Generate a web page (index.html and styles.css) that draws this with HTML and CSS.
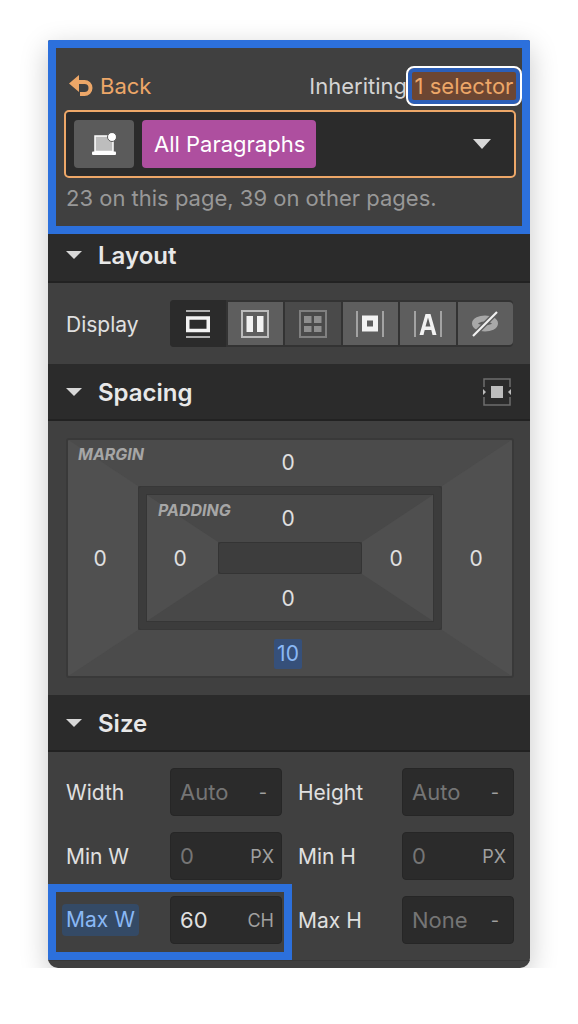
FILE: index.html
```html
<!DOCTYPE html>
<html>
  <head>
    <title>Style panel</title>
    <link rel="stylesheet" href="styles.css">
  </head>
  <body>
    <div class="panel">
      <div class="selector-block">
        <div class="top-row">
          <a class="back">
            <svg width="24" height="22" viewBox="0 0 24 22"><path d="M0 8.500 10 0v5h5.500a8 8 0 0 1 8 8 8 8 0 0 1-8 8H11v-4h4.500a4 4 0 0 0 0-8H10v8z" fill="#eda768"/></svg>
            Back
          </a>
          <div class="inherit">Inheriting<span class="inherit-count">1 selector</span></div>
        </div>
        <div class="selector-box">
          <span class="state-btn">
            <svg width="24" height="22" viewBox="0 0 24 22"><rect x="3" y="3" width="18" height="15.500" fill="#bdbdbd" stroke="#fff" stroke-width="1.500"/><rect x="0" y="18.500" width="24" height="3.500" rx="1" fill="#fff"/><circle cx="20" cy="4" r="4.500" fill="#fff" stroke="#5b5b5b"/></svg>
          </span>
          <span class="tag">All Paragraphs</span>
          <span class="caret caret-big"></span>
        </div>
        <div class="hint">23 on this page, 39 on other pages.</div>
      </div>

      <div class="section-head first"><span class="caret"></span>Layout</div>
      <div class="display-row">
        <span class="label">Display</span>
        <div class="segments">
          <span class="seg active">
            <svg width="24" height="28" viewBox="0 0 24 28"><path d="M0 1h24M0 27h24" stroke="#ddd" stroke-width="1.500"/><rect x="1.750" y="8" width="20.500" height="12.500" fill="none" stroke="#f2f2f2" stroke-width="3.500"/></svg>
          </span>
          <span class="seg">
            <svg width="28" height="28" viewBox="0 0 28 28"><rect x="1" y="1" width="26" height="26" fill="none" stroke="#bbb" stroke-width="2"/><rect x="5.500" y="6" width="6.500" height="16" fill="#f2f2f2"/><rect x="16" y="6" width="6.500" height="16" fill="#f2f2f2"/></svg>
          </span>
          <span class="seg dim">
            <svg width="28" height="28" viewBox="0 0 28 28"><rect x="1" y="1" width="26" height="26" fill="none" stroke="#808080" stroke-width="2"/><path d="M5 6h7.500v7H5zM15 6h7.500v7H15zM5 16h7.500v6H5zM15 16h7.500v6H15z" fill="#8e8e8e"/></svg>
          </span>
          <span class="seg">
            <svg width="28" height="26" viewBox="0 0 28 26"><path d="M1 0v26M27 0v26" stroke="#bbb" stroke-width="1.500"/><rect x="8.500" y="7" width="11" height="11" fill="none" stroke="#f2f2f2" stroke-width="5"/></svg>
          </span>
          <span class="seg">
            <svg width="28" height="26" viewBox="0 0 28 26"><path d="M1 0v26M27 0v26" stroke="#bbb" stroke-width="1.500"/><path d="M5.500 24 11.500 3h5l6 21h-4l-1.200-5h-6.600l-1.200 5zM11.500 15.500h5L14 6.500z" fill="#f2f2f2" fill-rule="evenodd"/></svg>
          </span>
          <span class="seg">
            <svg width="28" height="26" viewBox="0 0 28 26"><ellipse cx="14" cy="12.500" rx="10" ry="5" fill="none" stroke="#a8a8a8" stroke-width="6"/><path d="M2 25 26 1" stroke="#5e5e5e" stroke-width="5"/><path d="M2 25 26 1" stroke="#f2f2f2" stroke-width="2.200"/></svg>
          </span>
        </div>
      </div>

      <div class="section-head">
        <span class="caret"></span>Spacing
        <svg class="head-icon" width="28" height="28" viewBox="0 0 28 28"><path d="M1 9V1h26v8M1 19v8h26v-8" fill="none" stroke="#6e6e6e" stroke-width="1.500"/><rect x="8" y="8" width="12" height="12" fill="#bdbdbd"/><path d="M0 11v6l3-3zM28 11v6l-3-3z" fill="#bdbdbd"/></svg>
      </div>
      <div class="spacing-body">
        <div class="margin-box">
          <div class="padding-frame">
            <div class="padding-box">
              <div class="content-box"></div>
              <span class="box-title">PADDING</span>
              <span class="val val-top">0</span>
              <span class="val val-left">0</span>
              <span class="val val-right">0</span>
              <span class="val val-bottom">0</span>
            </div>
          </div>
          <span class="box-title">MARGIN</span>
          <span class="val val-top">0</span>
          <span class="val val-left">0</span>
          <span class="val val-right">0</span>
          <span class="val val-bottom changed">10</span>
        </div>
      </div>

      <div class="section-head"><span class="caret"></span>Size</div>
      <div class="size-body">
        <span class="label">Width</span>
        <div class="field"><span class="muted">Auto</span><span class="unit dash">-</span></div>
        <span class="label">Height</span>
        <div class="field"><span class="muted">Auto</span><span class="unit dash">-</span></div>
        <span class="label">Min W</span>
        <div class="field"><span class="muted">0</span><span class="unit">PX</span></div>
        <span class="label">Min H</span>
        <div class="field"><span class="muted">0</span><span class="unit">PX</span></div>
        <span class="label"><span class="label-set">Max W</span></span>
        <div class="field"><span>60</span><span class="unit">CH</span></div>
        <span class="label">Max H</span>
        <div class="field"><span class="muted">None</span><span class="unit dash">-</span></div>
        <div class="callout"></div>
      </div>
      <div class="panel-foot"></div>
    </div>
  </body>
</html>
```

FILE: styles.css
```css
* {
  box-sizing: border-box;
}
body {
  margin: 0;
  background: #fff;
  font-family: Inter, "Liberation Sans", sans-serif;
  font-size: 22px;
  color: #e6e6e6;
}
.panel {
  width: 482px;
  margin: 40px 48px 0;
  background: #404040;
  border-radius: 2px 2px 10px 10px;
  box-shadow: 0 8px 28px rgba(0, 0, 0, 0.22);
  overflow: hidden;
}

/* selector block */
.selector-block {
  height: 194px;
  border: 8px solid #2c70dc;
  padding: 18px 8px 0;
}
.top-row {
  display: flex;
  justify-content: space-between;
  align-items: center;
  height: 40px;
}
.back {
  display: flex;
  align-items: center;
  gap: 7px;
  margin-left: 5px;
  color: #eda768;
}
.inherit {
  display: flex;
  align-items: center;
  color: #d4d4d4;
  margin-right: -8px;
}
.inherit-count {
  margin-left: -1px;
  height: 40px;
  line-height: 36px;
  width: 116px;
  text-align: center;
  color: #eda768;
  background: #6c4632;
  border: 2px solid #fff;
  border-radius: 8px;
  box-shadow: inset 0 0 0 4px #2c5fb8;
}
.selector-box {
  display: flex;
  align-items: center;
  gap: 8px;
  height: 68px;
  margin: 4px -2px 0 0;
  padding: 0 8px;
  background: #2b2b2b;
  border: 2px solid #eda768;
  border-radius: 5px;
}
.state-btn {
  display: flex;
  align-items: center;
  justify-content: center;
  width: 60px;
  height: 48px;
  background: #5b5b5b;
  border-radius: 4px;
}
.tag {
  display: flex;
  align-items: center;
  height: 48px;
  padding: 0 11px 0 12px;
  background: #ae4f9f;
  color: #fff;
  border-radius: 4px;
}
.caret {
  display: inline-block;
  width: 0;
  height: 0;
  border-left: 8px solid transparent;
  border-right: 8px solid transparent;
  border-top: 8px solid #d8d8d8;
}
.caret-big {
  margin-left: auto;
  margin-right: 15px;
  border-left-width: 9px;
  border-right-width: 9px;
  border-top-width: 10px;
}
.hint {
  margin-top: 7px;
  margin-left: 2px;
  color: #989898;
}

/* section headers */
.section-head {
  position: relative;
  display: flex;
  align-items: center;
  gap: 16px;
  height: 57px;
  padding: 1px 0 0 18px;
  background: #2b2b2b;
  border-bottom: 2px solid #222;
  font-size: 24px;
  font-weight: 600;
  color: #e8e8e8;
}
.section-head.first {
  height: 49px;
  padding: 0 0 5px 18px;
}
.head-icon {
  margin-left: auto;
  margin-right: 19px;
}
.label {
  display: flex;
  align-items: center;
  font-size: 21px;
  color: #e0e0e0;
}

/* display row */
.display-row {
  display: flex;
  align-items: center;
  height: 81px;
  padding-left: 18px;
}
.display-row .label {
  width: 104px;
  padding-top: 2px;
}
.segments {
  display: flex;
  gap: 2px;
  width: 343px;
  height: 47px;
  padding: 2px 0;
  background: #333;
  border-radius: 4px;
}
.seg {
  flex: 1;
  display: flex;
  align-items: center;
  justify-content: center;
  background: #5e5e5e;
}
.seg:last-child {
  border-radius: 0 4px 4px 0;
}
.seg.active {
  margin: -2px 0;
  background: #2b2b2b;
  border-radius: 4px 0 0 4px;
}
.seg.dim {
  background: #4a4a4a;
}

/* spacing box model */
.spacing-body {
  height: 274px;
  padding: 18px 17px 0 19px;
}
.margin-box {
  position: relative;
  width: 446px;
  height: 238px;
  border-style: solid;
  border-width: 47px 71px;
  border-color: #4b4b4b #505050 #4b4b4b #505050;
  outline: 2px solid #393939;
  outline-offset: -1px;
  border-radius: 2px;
}
.padding-frame {
  height: 100%;
  padding: 9px;
  background: #3c3c3c;
  box-shadow: inset 0 0 0 1px #383838;
  border-radius: 3px;
}
.padding-box {
  position: relative;
  height: 100%;
  border-style: solid;
  border-width: 47px 71px;
  border-color: #484848 #4f4f4f #484848 #4f4f4f;
  box-shadow: 0 0 0 1px #363636;
}
.content-box {
  height: 100%;
  background: #3d3d3d;
  border: 1px solid #343434;
  border-radius: 3px;
}
.box-title {
  position: absolute;
  left: -60px;
  top: -42px;
  font-size: 16px;
  font-weight: 700;
  font-style: italic;
  color: #a6a6a6;
}
.val {
  position: absolute;
  line-height: 30px;
  color: #e0e0e0;
  font-size: 21px;
  text-align: center;
  transform: translate(-50%, -50%);
}
.margin-box > .val-top { left: 150px; top: -23px; }
.margin-box > .val-bottom { left: 150px; top: 168px; }
.margin-box > .val-left { left: -38px; top: 73px; }
.margin-box > .val-right { left: 338px; top: 73px; }
.padding-box > .val-top { left: 70px; top: -23px; }
.padding-box > .val-bottom { left: 70px; top: 57px; }
.padding-box > .val-left { left: -38px; top: 17px; }
.padding-box > .val-right { left: 178px; top: 17px; }
.changed {
  width: 28px;
  background: #36507a;
  color: #8ab8f5;
  border-radius: 2px;
}

/* size fields */
.size-body {
  position: relative;
  display: grid;
  grid-template-columns: 104px 112px 120px 112px;
  grid-auto-rows: 48px;
  row-gap: 16px;
  padding: 16px 0 16px 18px;
}
.size-body > .label:nth-child(4n + 3) {
  margin-left: 16px;
}
.field {
  display: flex;
  align-items: center;
  justify-content: space-between;
  padding: 0 7px 0 9px;
  background: #2b2b2b;
  border: 1px solid #262626;
  border-radius: 4px;
  color: #e0e0e0;
}
.muted {
  color: #757575;
}
.unit {
  font-size: 18px;
  color: #a0a0a0;
}
.dash {
  margin-right: 7px;
}
.label-set {
  margin-left: -4px;
  padding: 0 4px;
  line-height: 32px;
  background: #344a66;
  color: #8ab8f5;
  border-radius: 4px;
}
.callout {
  position: absolute;
  left: 0;
  top: 132px;
  width: 244px;
  height: 76px;
  border: 8px solid #2c70dc;
  pointer-events: none;
}
.panel-foot {
  height: 8px;
  border-top: 1px solid #383838;
}
```
